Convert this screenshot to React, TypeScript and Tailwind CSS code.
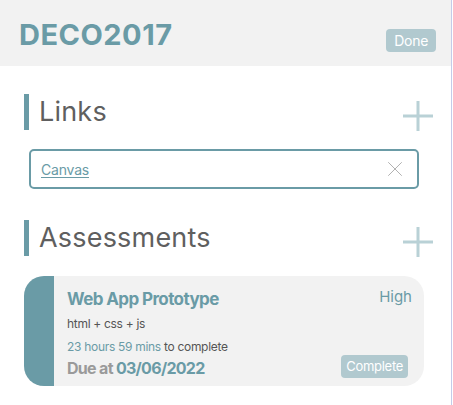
import { X } from 'lucide-react';

function PlusIcon() {
  return (
    <svg width="32" height="32" viewBox="0 0 32 32" className="shrink-0">
      <path d="M16 1v30M1 16h30" stroke="#b9d1d6" strokeWidth="3" fill="none" />
    </svg>
  );
}

function SectionHeader({ title }: { title: string }) {
  return (
    <div className="flex items-center justify-between pl-6 pr-[17px]">
      <div className="flex items-center gap-[10px]">
        <div className="w-[5px] h-[36px] bg-[#6a9ba6]" />
        <h2 className="text-[27px] leading-[36px] text-[#5f5f5f] tracking-[0.2px]">{title}</h2>
      </div>
      <div className="mt-[8px]">
        <PlusIcon />
      </div>
    </div>
  );
}

export default function App() {
  return (
    <div className="w-[453px] h-[405px] bg-white font-['Inter',sans-serif]">
      <div className="w-[452px] h-full border-r border-[#c4cbe9]">
        {/* Header */}
        <div className="h-[66px] bg-[#f2f2f2] flex items-center justify-between pl-[19px] pr-[15px]">
          <h1 className="text-[29px] font-bold text-[#6a9ba6] tracking-[0.5px] mt-[4px]">DECO2017</h1>
          <button className="mt-[14px] h-[23px] px-[8px] rounded-[4px] bg-[#b1c9cf] text-white text-[14px] tracking-[-0.3px]">
            Done
          </button>
        </div>

        {/* Links */}
        <div className="mt-[26px]">
          <SectionHeader title="Links" />
        </div>
        <div className="mt-[17px] ml-[29px] w-[390px] h-[40px] border-2 border-[#6a9ba6] rounded-[5px] flex items-center justify-between pl-[10px] pr-[9px]">
          <a className="text-[14px] text-[#6a9ba6] underline underline-offset-2 tracking-[-0.2px]">Canvas</a>
          <X size={26} strokeWidth={0.9} className="text-[#b0b0b0]" />
        </div>

        {/* Assessments */}
        <div className="mt-[29px]">
          <SectionHeader title="Assessments" />
        </div>

        <div className="mt-[18px] ml-[24px] w-[400px] h-[110px] rounded-[20px] bg-[#f2f2f2] flex overflow-hidden">
          <div className="w-[30px] bg-[#6a9ba6]" />
          <div className="flex-1 pl-[13px] pr-[12px] pt-[11px] flex flex-col">
            <div className="flex items-start justify-between">
              <h3 className="text-[17px] font-bold text-[#6a9ba6] tracking-[-0.6px] leading-[24px]">
                Web App Prototype
              </h3>
              <span className="text-[15px] text-[#6a9ba6] leading-[20px]">High</span>
            </div>
            <p className="mt-[5px] text-[12px] text-[#555] tracking-[-0.3px] leading-[16px]">html + css + js</p>
            <p className="mt-[7px] text-[12px] tracking-[-0.3px] leading-[16px]">
              <span className="text-[#6a9ba6]">23 hours 59 mins</span>{' '}
              <span className="text-[#555]">to complete</span>
            </p>
            <div className="flex items-end justify-between">
              <p className="text-[16px] font-bold tracking-[-0.7px] leading-[22px]">
                <span className="text-[#9a9a9a]">Due at </span>
                <span className="text-[#6a9ba6]">03/06/2022</span>
              </p>
              <button className="mb-[1px] mr-[4px] h-[23px] px-[5px] rounded-[4px] bg-[#b1c9cf] text-white text-[13px] tracking-[-0.3px]">
                Complete
              </button>
            </div>
          </div>
        </div>
      </div>
    </div>
  );
}
